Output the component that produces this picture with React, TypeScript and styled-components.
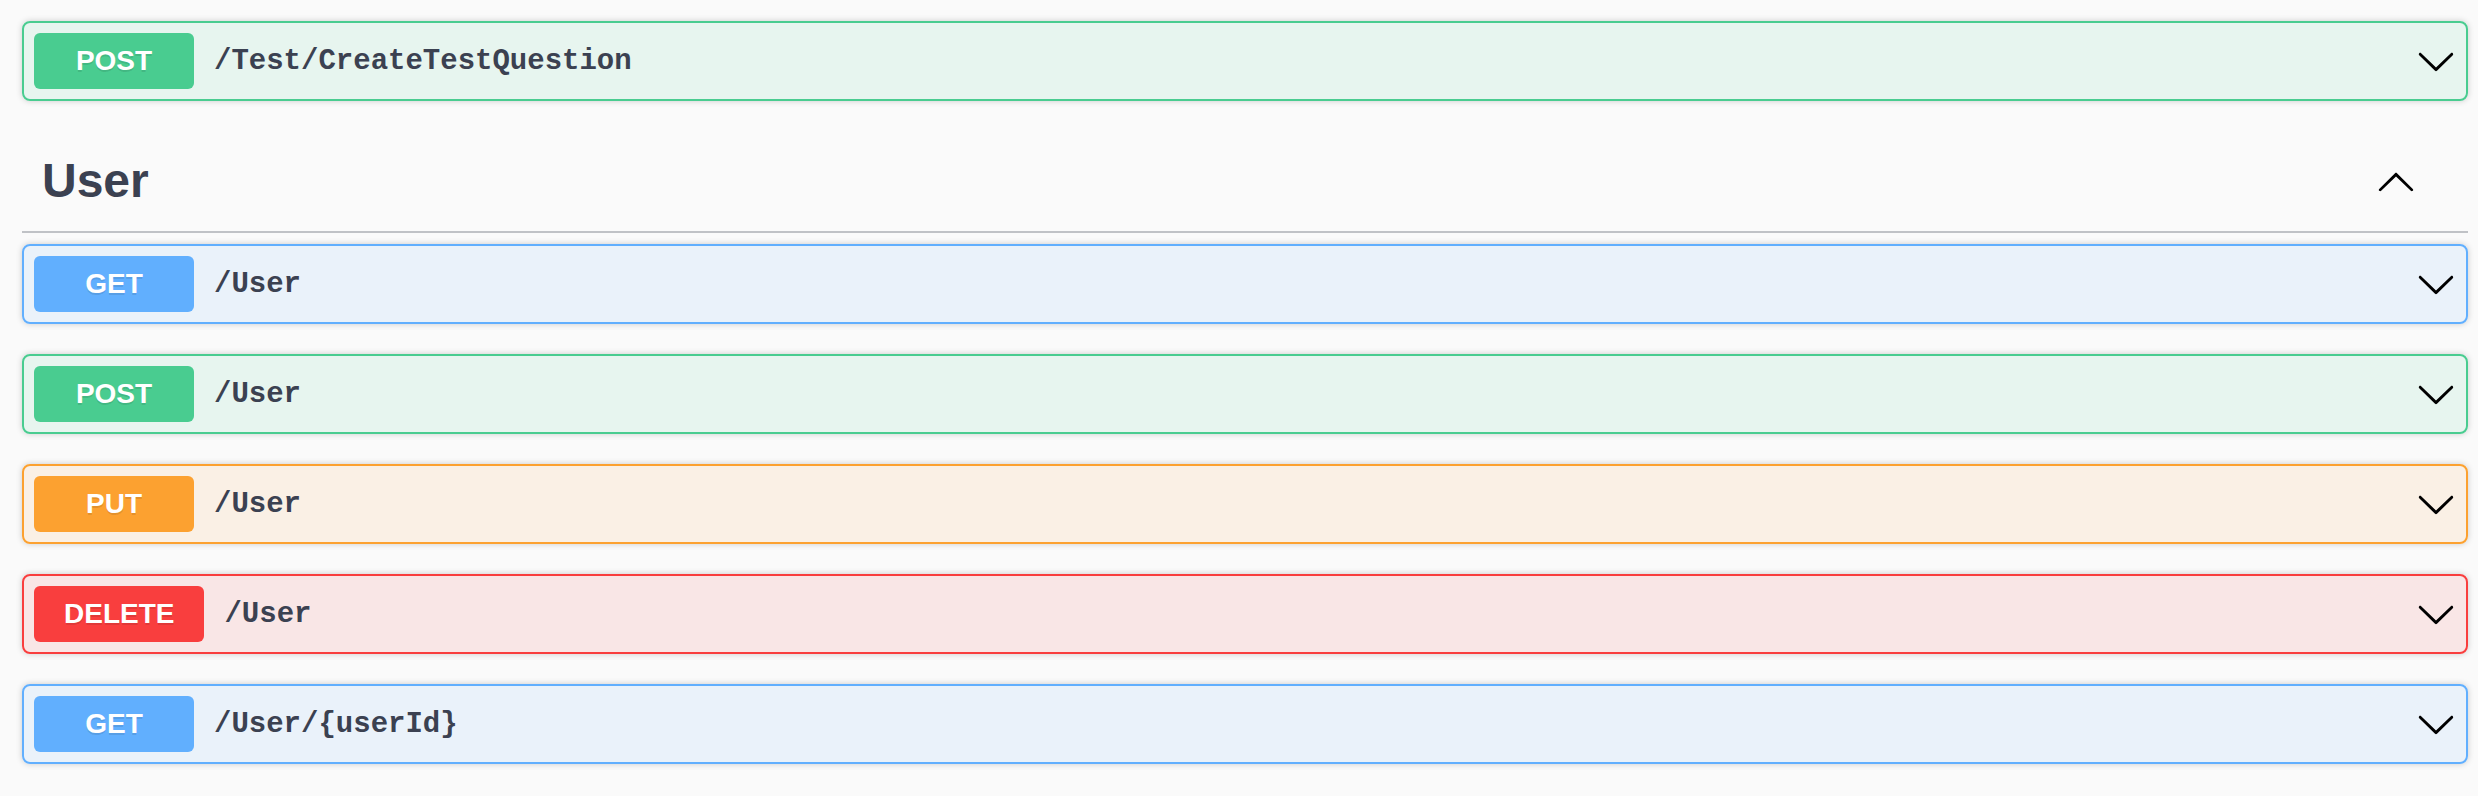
import React from "react";
import styled, { createGlobalStyle } from "styled-components";

type Method = "get" | "post" | "put" | "delete";

const palette: Record<Method, { main: string; tint: string }> = {
  get: { main: "#61affe", tint: "rgba(97,175,254,.1)" },
  post: { main: "#49cc90", tint: "rgba(73,204,144,.1)" },
  put: { main: "#fca130", tint: "rgba(252,161,48,.1)" },
  delete: { main: "#f93e3e", tint: "rgba(249,62,62,.1)" },
};

const GlobalStyle = createGlobalStyle`
  html, body {
    margin: 0;
    padding: 0;
    background: #fafafa;
    font-family: "Liberation Sans", Arial, sans-serif;
  }
`;

const Page = styled.div`
  padding: 21px 10px 32px 22px;
  display: flex;
  flex-direction: column;
`;

const Opblock = styled.div<{ $method: Method }>`
  margin-bottom: 30px;
  border: 2px solid ${(p) => palette[p.$method].main};
  background: ${(p) => palette[p.$method].tint};
  border-radius: 8px;
  box-shadow: 0 0 6px rgba(0, 0, 0, 0.19);
`;

const Summary = styled.div`
  display: flex;
  align-items: center;
  padding: 10px;
`;

const MethodBadge = styled.span<{ $method: Method }>`
  min-width: 160px;
  box-sizing: border-box;
  padding: 12px 30px;
  height: 56px;
  display: flex;
  align-items: center;
  justify-content: center;
  background: ${(p) => palette[p.$method].main};
  color: #fff;
  border-radius: 6px;
  font-family: "Liberation Sans", Arial, sans-serif;
  font-weight: 700;
  font-size: 28px;
  text-shadow: 0 2px 0 rgba(0, 0, 0, 0.1);
`;

const Path = styled.span`
  flex: 1;
  padding: 0 20px;
  font-family: "Liberation Mono", "DejaVu Sans Mono", monospace;
  font-weight: 600;
  font-size: 29px;
  color: #3b4151;
`;

const ArrowButton = styled.button`
  border: none;
  background: none;
  padding: 0;
  margin: 0;
  width: 40px;
  height: 40px;
  display: flex;
  align-items: center;
  justify-content: center;
  cursor: pointer;
  color: #000;
`;

const TagHeader = styled.div`
  display: flex;
  align-items: center;
  padding: 20px 52px 20px 20px;
  margin-bottom: 11px;
  border-bottom: 2px solid rgba(59, 65, 81, 0.3);
`;

const TagTitle = styled.h3`
  flex: 1;
  margin: 0;
  font-family: "Liberation Sans", Arial, sans-serif;
  font-weight: 700;
  font-size: 48px;
  line-height: 60px;
  color: #3b4151;
`;

const DownArrow = () => (
  <svg width="40" height="40" viewBox="0 0 20 20" fill="currentColor" aria-hidden="true">
    <path d="M17.418 6.109c.272-.268.709-.268.979 0s.271.701 0 .969l-7.908 7.83c-.27.268-.707.268-.979 0l-7.908-7.83c-.27-.268-.27-.701 0-.969.271-.268.709-.268.979 0L10 13.25l7.418-7.141z" />
  </svg>
);

const UpArrow = () => (
  <svg width="40" height="40" viewBox="0 0 20 20" fill="currentColor" aria-hidden="true">
    <path d="M17.418 14.908C17.69 15.176 18.127 15.176 18.397 14.908C18.667 14.64 18.668 14.207 18.397 13.939L10.489 6.109C10.219 5.841 9.782 5.841 9.51 6.109L1.602 13.939C1.332 14.207 1.332 14.64 1.602 14.908C1.873 15.176 2.311 15.176 2.581 14.908L10 7.767L17.418 14.908Z" />
  </svg>
);

const Operation = ({ method, path }: { method: Method; path: string }) => (
  <Opblock $method={method}>
    <Summary>
      <MethodBadge $method={method}>{method.toUpperCase()}</MethodBadge>
      <Path>{path}</Path>
      <ArrowButton aria-label="expand">
        <DownArrow />
      </ArrowButton>
    </Summary>
  </Opblock>
);

const userOps: { method: Method; path: string }[] = [
  { method: "get", path: "/User" },
  { method: "post", path: "/User" },
  { method: "put", path: "/User" },
  { method: "delete", path: "/User" },
  { method: "get", path: "/User/{userId}" },
];

export default function App() {
  return (
    <>
      <GlobalStyle />
      <Page>
        <Operation method="post" path="/Test/CreateTestQuestion" />
        <TagHeader>
          <TagTitle>User</TagTitle>
          <ArrowButton aria-label="collapse">
            <UpArrow />
          </ArrowButton>
        </TagHeader>
        {userOps.map((op, i) => (
          <Operation key={i} method={op.method} path={op.path} />
        ))}
      </Page>
    </>
  );
}
